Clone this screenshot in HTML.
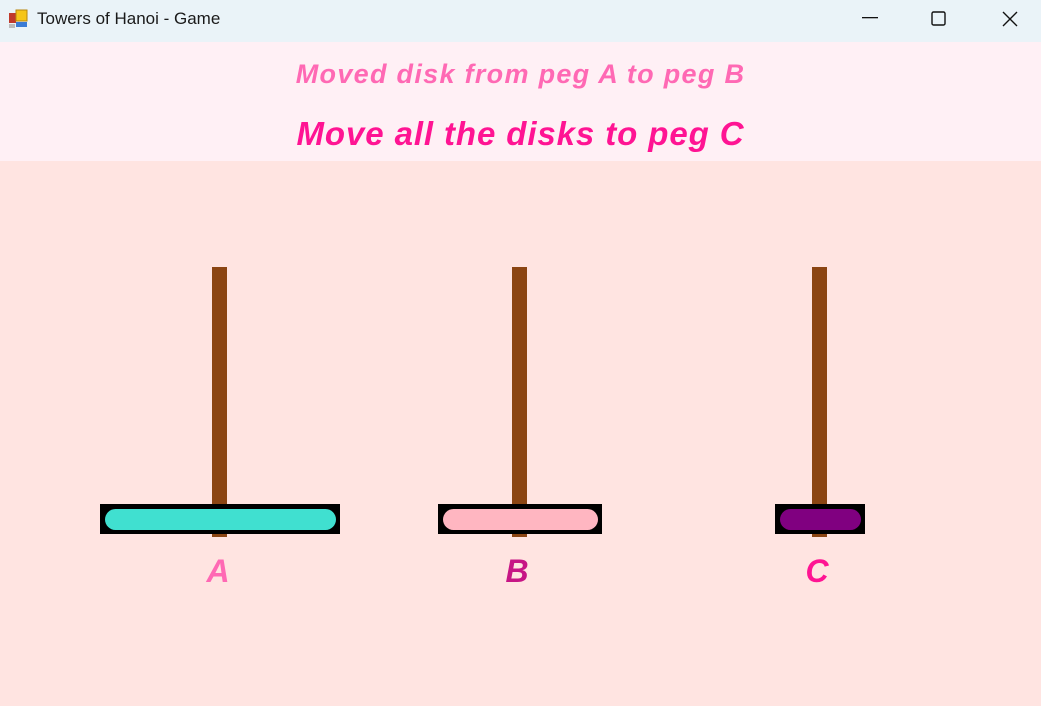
<!DOCTYPE html>
<html><head><style>
body{margin:0;width:1041px;height:706px;overflow:hidden;background:#ffe4e1;font-family:"Liberation Sans",sans-serif;position:relative}
.tb{position:absolute;left:0;top:0;width:1041px;height:42px;background:#eaf3f8}
.tt{position:absolute;left:37px;top:9px;font-size:17px;color:#1a1a1a}
.top{position:absolute;left:0;top:42px;width:1041px;height:119px;background:#fff0f5}
.m{position:absolute;left:0;width:1041px;text-align:center;font-weight:bold;font-style:italic}
.peg{position:absolute;top:267px;width:15px;height:270px;background:#8b4513}
.d{position:absolute;top:504px;height:30px;background:#000}
.d div{position:absolute;left:5px;right:4px;top:5px;bottom:4px;border-radius:11px}
.l{position:absolute;top:553px;font-size:32px;font-weight:bold;font-style:italic;width:40px;text-align:center}
</style></head><body>
<div class="tb">
<svg style="position:absolute;left:9px;top:9px" width="20" height="20"><rect x="0" y="4" width="7" height="10" fill="#c0392b"/><rect x="7" y="1" width="11" height="11" fill="#f5c518" stroke="#b8860b"/><rect x="7" y="13" width="11" height="5" fill="#3a7bd5"/><rect x="0" y="15" width="6" height="4" fill="#bbb"/></svg>
<div class="tt">Towers of Hanoi - Game</div>
<svg style="position:absolute;left:862px;top:17px" width="16" height="2"><rect width="16" height="1.3" fill="#111"/></svg>
<svg style="position:absolute;left:931px;top:11px" width="16" height="16"><rect x="1" y="1" width="13" height="13" rx="1.5" fill="none" stroke="#111" stroke-width="1.4"/></svg>
<svg style="position:absolute;left:1002px;top:11px" width="16" height="16"><path d="M1 1L15 15M15 1L1 15" stroke="#111" stroke-width="1.4"/></svg>
</div>
<div class="top">
<div class="m" style="top:17px;font-size:27px;letter-spacing:1.3px;color:#ff69b4">Moved disk from peg A to peg B</div>
<div class="m" style="top:73px;font-size:33px;letter-spacing:0.9px;color:#ff1493">Move all the disks to peg C</div>
</div>
<div class="peg" style="left:212px"></div>
<div class="peg" style="left:512px"></div>
<div class="peg" style="left:812px"></div>
<div class="d" style="left:100px;width:240px"><div style="background:#40e0d0"></div></div>
<div class="d" style="left:438px;width:164px"><div style="background:#ffb6c1"></div></div>
<div class="d" style="left:775px;width:90px"><div style="background:#800080"></div></div>
<div class="peg" style="left:212px;top:534px;height:3px"></div>
<div class="peg" style="left:512px;top:534px;height:3px"></div>
<div class="peg" style="left:812px;top:534px;height:3px"></div>
<div class="l" style="left:198px;color:#ff69b4">A</div>
<div class="l" style="left:497px;color:#c71585">B</div>
<div class="l" style="left:797px;color:#ff1493">C</div>
</body></html>
